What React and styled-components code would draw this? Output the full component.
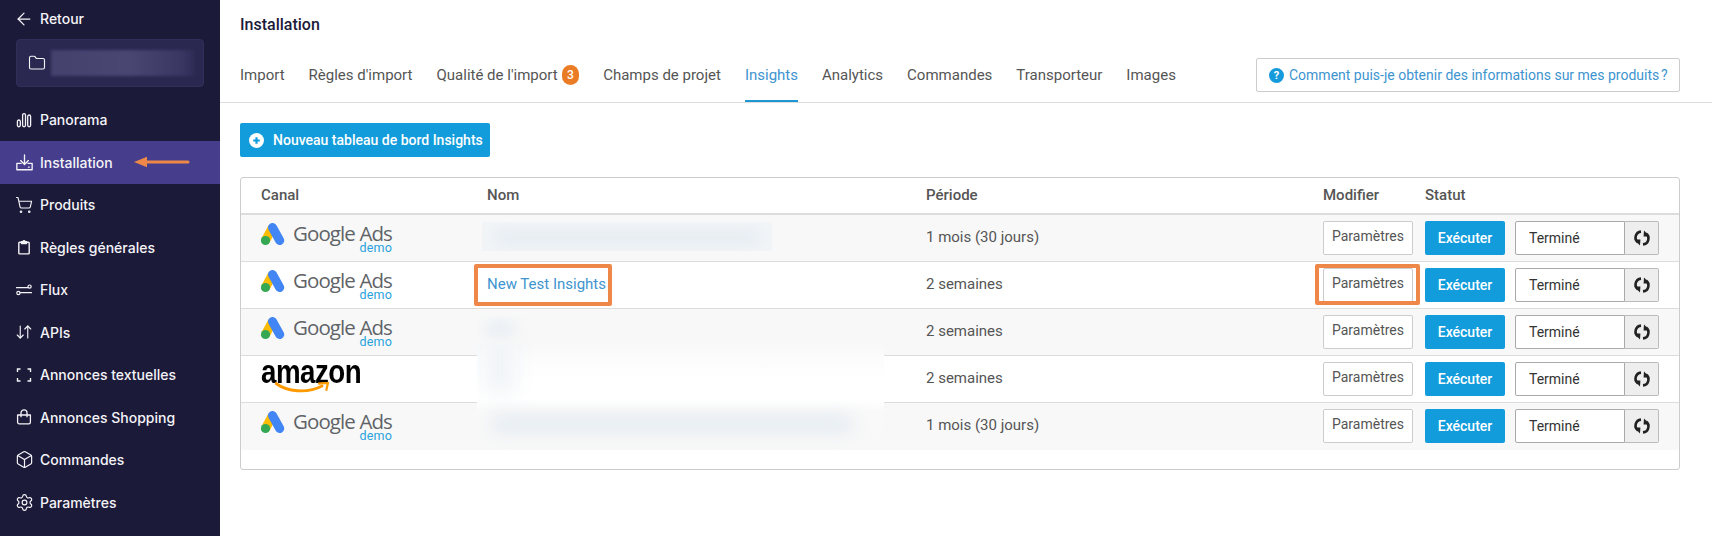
import React from 'react';
import styled, { createGlobalStyle } from 'styled-components';
import { ArrowLeft, Folder, ShoppingCart, ArrowDownUp, Box, Settings } from 'lucide-react';

const Global = createGlobalStyle`
  html, body { margin: 0; padding: 0; height: 100%; background: #fff; }
  body { overflow: hidden; font-family: Roboto, "Liberation Sans", sans-serif; }
  * { box-sizing: border-box; }
`;

const Page = styled.div`display: flex; width: 1712px; height: 536px; overflow: hidden;`;

const Sidebar = styled.aside`
  width: 220px; flex: none; background: #1c1a39; color: #f4f4f8;
  font-family: Inter, "Liberation Sans", sans-serif; font-size: 14px; font-weight: 500;
`;
const IconSlot = styled.span`
  width: 16px; height: 16px; flex: none; display: flex; align-items: center; justify-content: center;
  svg { flex: none; }
`;
const Back = styled.div`display: flex; align-items: center; gap: 8px; height: 37px; padding-left: 16px;`;
const Project = styled.div`
  margin: 2px 16px 11.5px; height: 48px; background: #2a2750; border: 1px solid #312e5c; border-radius: 4px;
  display: flex; align-items: center; padding-left: 12px; gap: 6px;
`;
const ProjectName = styled.div`
  width: 144px; height: 26px; background: linear-gradient(90deg, #44416d 0, #494672 55%, #3a3763 90%, #2e2b56 100%);
  filter: blur(1.5px);
`;
const NavItem = styled.div`
  position: relative; display: flex; align-items: center; height: 42.5px; padding-left: 16px; gap: 8px;
  background: ${p => (p.$active ? '#463e8c' : 'transparent')};
`;
const SideArrow = styled.svg`position: absolute; left: 134px; top: 15px;`;

const Main = styled.main`flex: 1; min-width: 0;`;
const Header = styled.header`border-bottom: 1px solid #ddd; height: 103px; padding: 15px 32px 0 20px;`;
const Title = styled.h1`margin: 0 0 23px; font-size: 16px; line-height: 20px; font-weight: 500; color: #1c1a39;`;
const TabsRow = styled.div`display: flex; justify-content: space-between; align-items: flex-start; height: 44px;`;
const Tabs = styled.nav`display: flex; gap: 24px;`;
const Tab = styled.div`
  height: 44px; padding-top: 6px; line-height: 22px; font-size: 15px; display: flex; align-items: flex-start;
  color: ${p => (p.$active ? '#3d94cf' : '#555')};
  border-bottom: 2px solid ${p => (p.$active ? '#1f97d4' : 'transparent')};
`;
const Badge = styled.span`
  width: 17.5px; height: 20px; margin: 1px 0 0 4px; border-radius: 9px; background: #ea7c26; color: #fff;
  font-size: 12px; font-weight: 500; line-height: 20px; text-align: center;
`;
const Help = styled.div`
  width: 424px; height: 34px; border: 1px solid #ccc; border-radius: 2px; display: flex; align-items: center;
  padding-left: 12px; gap: 5px; color: #3d94cf; font-size: 14px; white-space: nowrap;
`;
const HelpDot = styled.span`
  width: 15px; height: 15px; border-radius: 50%; background: #159bdb; color: #fff; font-size: 11px; font-weight: 700;
  display: flex; align-items: center; justify-content: center; flex: none;
`;

const Content = styled.section`padding: 20px 32px 0 20px;`;
const NewButton = styled.div`
  width: 250px; height: 34px; border-radius: 2px; background: #129cdb; color: #fff; font-size: 14px; font-weight: 500;
  display: flex; align-items: center; padding-left: 9px; gap: 9px; white-space: nowrap;
`;
const Table = styled.div`
  position: relative; margin-top: 20px; height: 293px; border: 1px solid #ccc; border-radius: 3px; color: #555; overflow: hidden;
`;
const columns = '226px 439px 397px 102px 1fr';
const HeadRow = styled.div`
  display: grid; grid-template-columns: ${columns}; height: 37px; padding-left: 20px; align-items: center;
  border-bottom: 2px solid #ddd; font-size: 15px; font-weight: 500; padding-bottom: 1px;
`;
const Row = styled.div`
  display: grid; grid-template-columns: ${columns}; height: 47px; padding-left: 20px; align-items: center;
  background: ${p => (p.$odd ? '#f8f8f8' : '#fff')};
  border-bottom: 1px solid ${p => (p.$last ? 'transparent' : '#ddd')};
  font-size: 15px;
`;
const TextCell = styled.div`padding-bottom: 2px;`;
const NameLink = styled.span`
  position: relative; display: inline-block; line-height: 22px; color: #3d94cf;
  &::after {
    content: ''; position: absolute; left: -13px; right: -6px; top: -9px; bottom: -11px;
    border: 4px solid #ee8748; border-radius: 2px;
  }
`;
const GoogleLogo = styled.div`display: flex; align-items: flex-start; gap: 8px; height: 34px;`;
const LogoMark = styled.svg`flex: none; margin-top: 2px;`;
const Wordmark = styled.div`display: flex; flex-direction: column; align-items: flex-end; margin-top: 3px; font-family: "Open Sans", sans-serif;`;
const WordText = styled.span`font-size: 20.5px; letter-spacing: -0.9px; line-height: 19px; color: #5f6368; white-space: nowrap;`;
const Demo = styled.span`font-size: 12.5px; line-height: 10px; color: #29a3dc; font-family: Roboto, sans-serif; letter-spacing: .2px;`;
const AmazonLogo = styled.div`position: relative; width: 100px; height: 38px; margin-top: -6px; color: #000;`;
const AmazonText = styled.span`
  display: block; font-family: "Liberation Sans", sans-serif; font-weight: 700; font-size: 33px; line-height: 30px;
  letter-spacing: -0.6px; transform: scaleX(.84); transform-origin: left center; white-space: nowrap;
`;
const Smile = styled.svg`position: absolute; left: 14px; top: 25px;`;

const ParamsButton = styled.div`
  position: relative; width: 90px; height: 34px; background: #fff; border: 1px solid #ccc; border-radius: 2px;
  display: flex; align-items: center; justify-content: center; padding-bottom: 4px; font-size: 14px; color: #555;
  ${p => p.$highlight && `&::after {
    content: ''; position: absolute; left: -9px; right: -8px; top: -5px; bottom: -4px;
    border: 4px solid #ee8748; border-radius: 2px;
  }`}
`;
const StatusCell = styled.div`display: flex; align-items: center;`;
const RunButton = styled.div`
  width: 80px; height: 34px; margin-right: 10px; border-radius: 2px; background: #129cdb; color: #fff; font-size: 14px; font-weight: 500;
  display: flex; align-items: center; justify-content: center;
`;
const StatusBox = styled.div`
  width: 110px; height: 34px; background: #fff; border: 1px solid #aaa; border-radius: 2px 0 0 2px; color: #333; font-size: 14px;
  display: flex; align-items: center; padding-left: 13px;
`;
const RefreshBox = styled.div`
  width: 34px; height: 34px; background: #eee; border: 1px solid #bbb; border-left: 0; border-radius: 0 2px 2px 0;
  display: flex; align-items: center; justify-content: center;
`;

const Patch = styled.div`
  position: absolute; left: 241px; top: 44px; width: 290px; height: 29px; background: #f2f5f7; overflow: hidden;
`;
const Blob = styled.div`position: absolute; background: #e3ebf2; filter: blur(7px); border-radius: 6px;`;
const WideBlob = styled(Blob)`left: 12px; top: 9px; width: 266px; height: 13px;`;
const SmallPatch = styled.div`position: absolute; left: 236px; top: 138px; width: 60px; height: 38px; overflow: hidden;`;
const SmallBlob = styled(Blob)`left: 8px; top: 6px; width: 30px; height: 14px; background: #e6edf3;`;
const BigPatch = styled.div`
  position: absolute; left: 236px; top: 166px; width: 407px; height: 106px; overflow: hidden;
  background: linear-gradient(180deg, #f8f8f8 0, #fcfcfc 14%, #fff 35%, #fff 52%, #f9f9f9 64%, #f8f8f8 100%);
`;
const ColumnBlob = styled(Blob)`left: 6px; top: -12px; width: 34px; height: 62px; background: #f2f5f8; filter: blur(9px);`;
const BottomBlob = styled(Blob)`left: 14px; top: 72px; width: 362px; height: 16px; background: #e2eaf1; filter: blur(9px);`;

const InstallIcon = () => (
  <svg width="17" height="17" viewBox="0 0 16 16" fill="none" stroke="currentColor" strokeWidth="1.25" strokeLinecap="round" strokeLinejoin="round">
    <path d="M8 .8v9M4.4 6.2 8 9.9l3.6-3.7M4.8 8.8H.8v6h14.4v-6h-4" />
    <path d="M11.8 12.4h.6" />
  </svg>
);
const BarsIcon = () => (
  <svg width="16" height="16" viewBox="0 0 16 16" fill="none" stroke="currentColor" strokeWidth="1.3">
    <rect x="1.4" y="8" width="2.9" height="6.8" rx="1.45" />
    <rect x="6.6" y="1.6" width="2.9" height="13.2" rx="1.45" />
    <rect x="11.7" y="3" width="2.9" height="11.8" rx="1.45" />
  </svg>
);
const ClipboardIcon = () => (
  <svg width="16" height="16" viewBox="0 0 16 16" fill="none" stroke="currentColor" strokeWidth="1.4" strokeLinejoin="round">
    <path d="M5.5 3.3H3.6a.8.8 0 0 0-.8.8v10a.8.8 0 0 0 .8.8h8.8a.8.8 0 0 0 .8-.8v-10a.8.8 0 0 0-.8-.8h-1.9" />
    <path d="M5.5 4.6V2.7h1.4a1.1 1.1 0 0 1 2.2 0h1.4v1.9z" fill="currentColor" />
  </svg>
);
const FluxIcon = () => (
  <svg width="16" height="16" viewBox="0 0 16 16" fill="none" stroke="currentColor" strokeWidth="1.2" strokeLinecap="round">
    <path d="M.4 5.7h11.4M4.4 10.7h11.2" />
    <circle cx="13.6" cy="4.6" r="1.6" />
    <circle cx="2.4" cy="11" r="1.6" />
  </svg>
);
const CornersIcon = () => (
  <svg width="16" height="16" viewBox="0 0 16 16" fill="none" stroke="currentColor" strokeWidth="1.4">
    <path d="M1.5 5V2h3M11.5 2h3v3M14.5 11v3h-3M4.5 14h-3v-3" />
  </svg>
);
const BagIcon = () => (
  <svg width="16" height="16" viewBox="0 0 16 16" fill="none" stroke="currentColor" strokeWidth="1.3" strokeLinejoin="round">
    <path d="M1.6 6h12.8v7.2a1.6 1.6 0 0 1-1.6 1.6H3.2a1.6 1.6 0 0 1-1.6-1.6z" />
    <path d="M5 8.2V3.8a3 3 0 0 1 6 0v4.4" />
  </svg>
);
const AdsMark = () => (
  <LogoMark width="24" height="23" viewBox="0 0 24 23" fill="none">
    <path d="M11.5 4.5 4.5 17.5" stroke="#fbbc04" strokeWidth="9" />
    <circle cx="4.5" cy="17.5" r="4.6" fill="#34a853" />
    <path d="M11.5 4.5 18.7 17.5" stroke="#4285f4" strokeWidth="9" strokeLinecap="round" />
  </LogoMark>
);
const Google = () => (
  <GoogleLogo>
    <AdsMark />
    <Wordmark>
      <WordText>Google Ads</WordText>
      <Demo>demo</Demo>
    </Wordmark>
  </GoogleLogo>
);
const Amazon = () => (
  <AmazonLogo>
    <AmazonText>amazon</AmazonText>
    <Smile width="56" height="12" viewBox="0 0 56 12" fill="none">
      <path d="M1 1.5C12 9.5 32 12 47 4" stroke="#f90" strokeWidth="2.8" strokeLinecap="round" />
      <path d="M43 1.6 53 .8l-1.8 8" stroke="#f90" strokeWidth="2.2" strokeLinejoin="round" fill="none" />
    </Smile>
  </AmazonLogo>
);
const Refresh = () => (
  <svg width="18" height="18" viewBox="0 0 18 18" fill="none" stroke="#222" strokeWidth="2.6">
    <path d="M8 2.6A6 6 0 0 0 5 13.4" />
    <path d="M1.2 10.6 7.4 10.4 7 16.4z" fill="#222" stroke="none" />
    <path d="M10 15.4A6 6 0 0 0 13 4.6" />
    <path d="M16.8 7.4 10.6 7.6 11 1.6z" fill="#222" stroke="none" />
  </svg>
);

const rows = [
  { logo: <Google />, period: '1 mois (30 jours)' },
  { logo: <Google />, name: 'New Test Insights', period: '2 semaines', highlight: true },
  { logo: <Google />, period: '2 semaines' },
  { logo: <Amazon />, period: '2 semaines' },
  { logo: <Google />, period: '1 mois (30 jours)' },
];
const tabs = ['Import', "Règles d'import", "Qualité de l'import", 'Champs de projet', 'Insights', 'Analytics', 'Commandes', 'Transporteur', 'Images'];

export default function App() {
  return (
    <Page>
      <Global />
      <Sidebar>
        <Back><IconSlot><ArrowLeft size={20} strokeWidth={1.5} /></IconSlot>Retour</Back>
        <Project><IconSlot><Folder size={18} strokeWidth={1.5} /></IconSlot><ProjectName /></Project>
        <NavItem><IconSlot><BarsIcon /></IconSlot>Panorama</NavItem>
        <NavItem $active>
          <IconSlot><InstallIcon /></IconSlot>Installation
          <SideArrow width="56" height="12" viewBox="0 0 56 12" fill="none">
            <path d="M10 6h44" stroke="#ee8748" strokeWidth="3" strokeLinecap="round" />
            <path d="M0 6 13 .8v10.4z" fill="#ee8748" />
          </SideArrow>
        </NavItem>
        <NavItem><IconSlot><ShoppingCart size={18} strokeWidth={1.5} /></IconSlot>Produits</NavItem>
        <NavItem><IconSlot><ClipboardIcon /></IconSlot>Règles générales</NavItem>
        <NavItem><IconSlot><FluxIcon /></IconSlot>Flux</NavItem>
        <NavItem><IconSlot><ArrowDownUp size={18} strokeWidth={1.5} /></IconSlot>APIs</NavItem>
        <NavItem><IconSlot><CornersIcon /></IconSlot>Annonces textuelles</NavItem>
        <NavItem><IconSlot><BagIcon /></IconSlot>Annonces Shopping</NavItem>
        <NavItem><IconSlot><Box size={19} strokeWidth={1.5} /></IconSlot>Commandes</NavItem>
        <NavItem><IconSlot><Settings size={19} strokeWidth={1.5} /></IconSlot>Paramètres</NavItem>
      </Sidebar>
      <Main>
        <Header>
          <Title>Installation</Title>
          <TabsRow>
            <Tabs>
              {tabs.map(t => (
                <Tab key={t} $active={t === 'Insights'}>
                  {t}{t.startsWith('Qualité') && <Badge>3</Badge>}
                </Tab>
              ))}
            </Tabs>
            <Help><HelpDot>?</HelpDot>Comment puis-je obtenir des informations sur mes produits{'\u202f'}?</Help>
          </TabsRow>
        </Header>
        <Content>
          <NewButton>
            <svg width="15" height="15" viewBox="0 0 15 15">
              <circle cx="7.5" cy="7.5" r="7.5" fill="#fff" />
              <path d="M7.5 4.2v6.6M4.2 7.5h6.6" stroke="#129cdb" strokeWidth="2.2" />
            </svg>
            Nouveau tableau de bord Insights
          </NewButton>
          <Table>
            <HeadRow><span>Canal</span><span>Nom</span><span>Période</span><span>Modifier</span><span>Statut</span></HeadRow>
            {rows.map((r, i) => (
              <Row key={i} $odd={i % 2 === 0} $last={i === rows.length - 1}>
                <div>{r.logo}</div>
                <TextCell>{r.name && <NameLink>{r.name}</NameLink>}</TextCell>
                <TextCell>{r.period}</TextCell>
                <div><ParamsButton $highlight={r.highlight}>Paramètres</ParamsButton></div>
                <StatusCell>
                  <RunButton>Exécuter</RunButton>
                  <StatusBox>Terminé</StatusBox>
                  <RefreshBox><Refresh /></RefreshBox>
                </StatusCell>
              </Row>
            ))}
            <Patch><WideBlob /></Patch>
            <SmallPatch><SmallBlob /></SmallPatch>
            <BigPatch><ColumnBlob /><BottomBlob /></BigPatch>
          </Table>
        </Content>
      </Main>
    </Page>
  );
}
